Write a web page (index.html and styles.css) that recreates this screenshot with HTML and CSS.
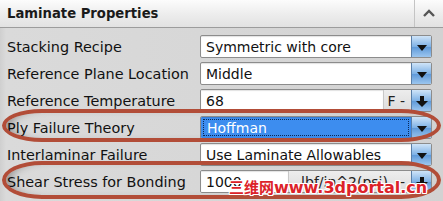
FILE: index.html
```html
<!DOCTYPE html>
<html>
<head>
<meta charset="utf-8">
<link rel="stylesheet" href="styles.css">
</head>
<body>
<div class="panel">
  <div class="header">
    <div class="title">Laminate Properties</div>
    <div class="collapse">
      <svg width="12" height="8" viewBox="0 0 12 8"><path d="M1 7 L6 2 L11 7" fill="none" stroke="#555" stroke-width="2.4"/></svg>
    </div>
  </div>
  <div class="rows">
    <div class="label">Stacking Recipe</div>
    <div class="combo"><span class="value">Symmetric with core</span><span class="btn"><i class="tri"></i></span></div>

    <div class="label">Reference Plane Location</div>
    <div class="combo"><span class="value">Middle</span><span class="btn"><i class="tri"></i></span></div>

    <div class="label">Reference Temperature</div>
    <div class="combo unit"><span class="value field wide">68</span><span class="unit-text">F -</span><span class="btn"><i class="arrow"></i></span></div>

    <div class="label">Ply Failure Theory</div>
    <div class="combo sel"><span class="value"><span class="focus">Hoffman</span></span><span class="btn"><i class="tri"></i></span></div>

    <div class="label">Interlaminar Failure</div>
    <div class="combo"><span class="value">Use Laminate Allowables</span><span class="btn"><i class="tri"></i></span></div>

    <div class="label">Shear Stress for Bonding</div>
    <div class="combo unit"><span class="value field narrow">1000</span><span class="unit-text">lbf/in^2(psi)<span class="dash">-</span></span><span class="btn"><i class="arrow"></i></span></div>
  </div>
  <div class="ring ring1"></div>
  <div class="ring ring2"></div>
  <div class="watermark"><span class="cjk">三维网</span>www.3dportal.cn</div>
</div>
</body>
</html>
```

FILE: styles.css
```css
* { box-sizing: border-box; }
html, body { margin: 0; padding: 0; }
body {
  width: 443px;
  height: 201px;
  overflow: hidden;
  background: #d5d5d5;
  font-family: "DejaVu Sans", "Noto Sans CJK SC", sans-serif;
  color: #111;
}
.panel {
  position: relative;
  width: 443px;
  height: 201px;
  background: linear-gradient(90deg, #cfcfcf 0px, #dadada 6px, #d6d6d6 60%, #d2d2d2 100%);
}
.header {
  display: flex;
  height: 28px;
  background: linear-gradient(#fcfcfc, #ececec 55%, #e2e2e2);
  border-bottom: 1px solid #9c9c9c;
}
.title {
  flex: 1;
  padding-left: 7px;
  font-size: 13.2px;
  font-weight: bold;
  line-height: 27px;
  color: #1a1a1a;
  border-right: 1px solid #c4c4c4;
}
.collapse {
  width: 28px;
  display: flex;
  align-items: center;
  justify-content: center;
  padding-bottom: 2px;
}
.rows {
  display: grid;
  grid-template-columns: 200px 232px;
  grid-auto-rows: 23px;
  row-gap: 4px;
  padding-top: 7px;
}
.label {
  font-size: 14.4px;
  padding-left: 7px;
  display: flex;
  align-items: center;
  white-space: nowrap;
}
.combo {
  display: flex;
  height: 23px;
  border: 1px solid #8c8c8c;
  border-radius: 2px;
  background: #fff;
  overflow: hidden;
}
.value {
  flex: 1;
  display: flex;
  align-items: center;
  padding-left: 5px;
  font-size: 14px;
  white-space: nowrap;
  box-shadow: inset 0 1px 1px rgba(0,0,0,0.12);
}
.btn {
  width: 20px;
  display: flex;
  align-items: center;
  justify-content: center;
  background: linear-gradient(#cfe4f8, #7fb2e6 50%, #5d98d8 52%, #9cc6ef);
  border-left: 1px solid #5a7fa8;
}
.tri {
  width: 0; height: 0;
  border-left: 5px solid transparent;
  border-right: 5px solid transparent;
  border-top: 6px solid #111;
  margin-top: 2px;
}
.arrow {
  position: relative;
  width: 4px; height: 5px;
  background: #111;
  margin-top: -4px;
}
.arrow::after {
  content: "";
  position: absolute;
  left: -4px; top: 5px;
  border-left: 6px solid transparent;
  border-right: 6px solid transparent;
  border-top: 6px solid #111;
}
.combo.unit { background: #e4e4e4; }
.field { background: #fff; flex: none; border-right: 1px solid #c8c8c8; }
.field.wide { width: 183px; }
.field.narrow { width: 88px; }
.unit-text {
  flex: 1;
  display: flex;
  align-items: center;
  justify-content: flex-end;
  padding-right: 6px;
  font-size: 14px;
  color: #222;
  background: linear-gradient(#ededed, #dcdcdc);
  white-space: nowrap;
}
.dash { margin-left: 12px; }
.sel .value {
  background: #3d8def;
  color: #fff;
  padding: 2px;
}
.focus {
  display: flex;
  align-items: center;
  width: 100%;
  height: 100%;
  padding-left: 3px;
  border: 1px dotted #0b2a55;
}
.ring {
  position: absolute;
  border: 4px solid #b24d38;
  border-radius: 40px / 50%;
  box-shadow: inset 10px 0 8px -5px rgba(0,0,0,0.3);
}
.ring1 { left: 2px; top: 109px; width: 439px; height: 33px; }
.ring2 { left: 2px; top: 161px; width: 439px; height: 38px; }
.watermark {
  position: absolute;
  left: 229px;
  top: 176px;
  font-size: 16px;
  font-weight: bold;
  color: #dc2229;
  text-shadow: 1px 0 #fff, -1px 0 #fff, 0 1px #fff, 0 -1px #fff, 1px 1px #fff, -1px -1px #fff, 1px -1px #fff, -1px 1px #fff;
  white-space: nowrap;
}
.cjk { font-size: 15px; font-family: "Noto Sans CJK SC", sans-serif; font-weight: bold; }
```
